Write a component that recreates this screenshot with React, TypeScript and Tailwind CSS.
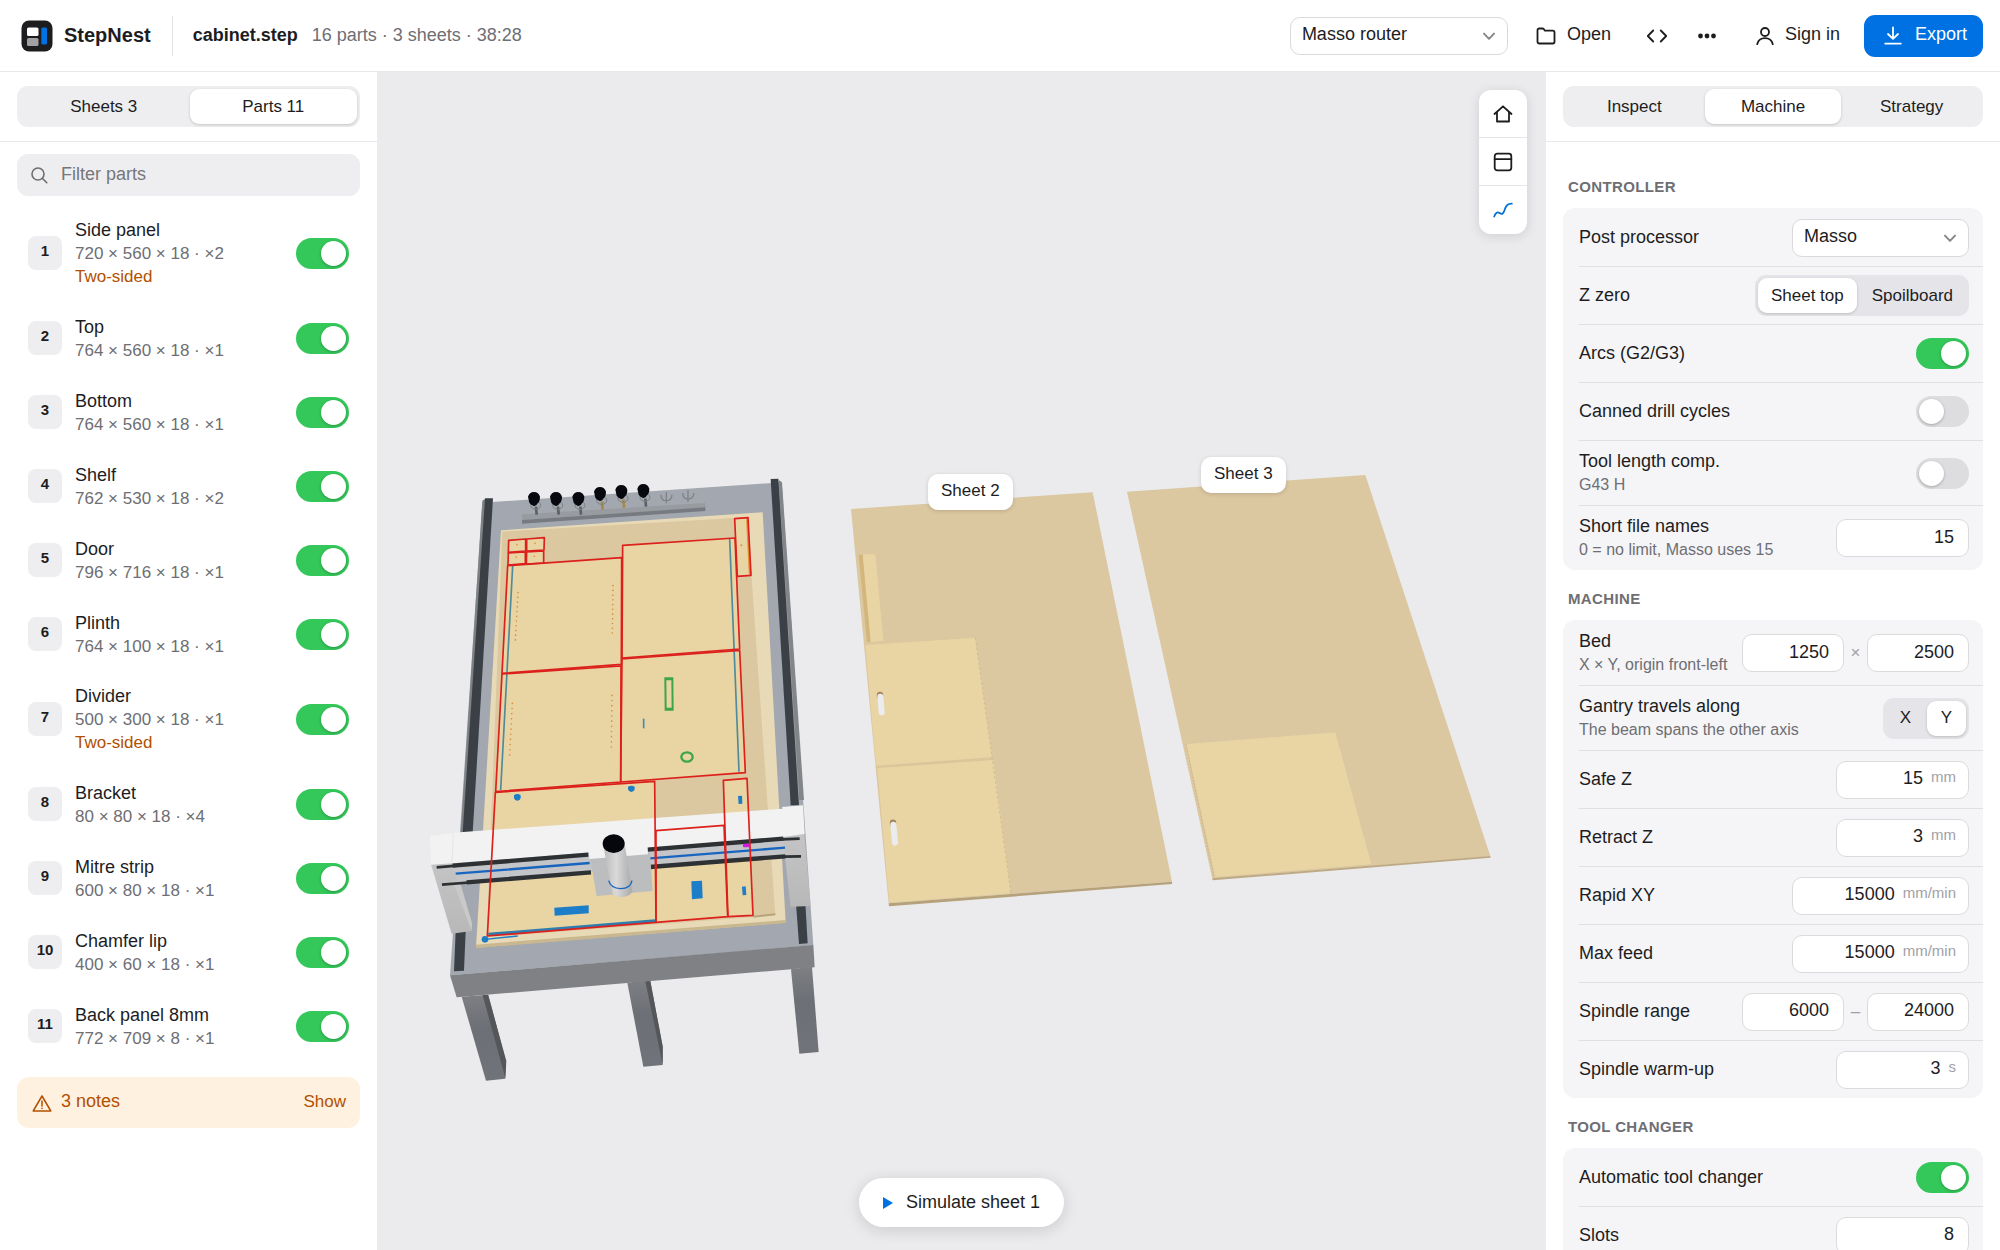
import React, { useId, useState } from "react";

type Part = { name: string; size: string; qty: number; twoSided?: boolean };

const PARTS: Part[] = [
  { name: "Side panel", size: "720 × 560 × 18", qty: 2, twoSided: true },
  { name: "Top", size: "764 × 560 × 18", qty: 1 },
  { name: "Bottom", size: "764 × 560 × 18", qty: 1 },
  { name: "Shelf", size: "762 × 530 × 18", qty: 2 },
  { name: "Door", size: "796 × 716 × 18", qty: 1 },
  { name: "Plinth", size: "764 × 100 × 18", qty: 1 },
  { name: "Divider", size: "500 × 300 × 18", qty: 1, twoSided: true },
  { name: "Bracket", size: "80 × 80 × 18", qty: 4 },
  { name: "Mitre strip", size: "600 × 80 × 18", qty: 1 },
  { name: "Chamfer lip", size: "400 × 60 × 18", qty: 1 },
  { name: "Back panel 8mm", size: "772 × 709 × 8", qty: 1 },
];

/* ---------- icons ---------- */

function Icon({ children, className = "size-5" }: { children: React.ReactNode; className?: string }) {
  return (
    <svg
      viewBox="0 0 20 20"
      className={`shrink-0 ${className}`}
      fill="none"
      stroke="currentColor"
      strokeWidth="1.8"
      strokeLinecap="round"
      strokeLinejoin="round"
      aria-hidden="true"
    >
      {children}
    </svg>
  );
}

function Logo() {
  return (
    <svg viewBox="0 0 32 32" className="size-8 shrink-0" aria-hidden="true">
      <rect x="0.5" y="0.5" width="31" height="31" rx="7.5" fill="#1d1d1f" />
      <rect x="6" y="7.5" width="11.500" height="8.500" rx="1.500" fill="#fff" />
      <rect x="6" y="18" width="11.500" height="8" rx="1.500" fill="#a1a1a3" />
      <rect x="20.300" y="7.500" width="5.700" height="17" rx="1.500" fill="#0071e3" />
    </svg>
  );
}

const Chevron = () => (
  <svg
    viewBox="0 0 12 8"
    className="pointer-events-none absolute right-[13px] top-1/2 h-2 w-3 -translate-y-1/2 text-[#86868b]"
    fill="none"
    stroke="currentColor"
    strokeWidth="1.9"
    strokeLinecap="round"
    strokeLinejoin="round"
    aria-hidden="true"
  >
    <path d="M1 1.600 6 6.800 11 1.600" />
  </svg>
);

/* ---------- controls ---------- */

function Select({ label, value, id, className }: { label?: string; value: string; id?: string; className: string }) {
  return (
    <div className={`relative ${className}`}>
      <select
        id={id}
        aria-label={label}
        defaultValue={value}
        className="h-[38px] w-full appearance-none rounded-[10px] border border-[#d9d9dc] bg-white pb-0.5 pl-[11px] pr-8 text-[18px]"
      >
        <option>{value}</option>
      </select>
      <Chevron />
    </div>
  );
}

function Toggle({ on, id, label }: { on?: boolean; id?: string; label?: string }) {
  return (
    <input
      type="checkbox"
      role="switch"
      id={id}
      aria-label={label}
      defaultChecked={on}
      className="relative h-[31px] w-[53px] shrink-0 appearance-none rounded-full bg-[#dddddf] before:absolute before:left-[3px] before:top-[3px] before:size-[25px] before:rounded-full before:bg-white before:shadow-[0_1px_3px_rgba(0,0,0,0.25)] checked:bg-[#34c759] checked:before:left-[25px]"
    />
  );
}

function Segmented({
  options,
  initial,
  label,
  fill,
  compact,
}: {
  options: string[];
  initial: string;
  label: string;
  fill?: boolean;
  compact?: boolean;
}) {
  const [active, setActive] = useState(initial);
  return (
    <div
      role="group"
      aria-label={label}
      className={`flex h-[41px] gap-0.5 rounded-[11px] p-[3px] text-[17px] ${fill ? "bg-[#eeeef0]" : "bg-[#e5e5e9]"}`}
    >
      {options.map((o) => (
        <button
          key={o}
          type="button"
          aria-pressed={o === active}
          onClick={() => setActive(o)}
          className={`rounded-[9px] ${fill ? "flex-1" : compact ? "w-[39px]" : "px-[13px]"} ${
            o === active ? "bg-white shadow-[0_1px_3px_rgba(0,0,0,0.18)]" : ""
          }`}
        >
          {o}
        </button>
      ))}
    </div>
  );
}

function NumberField({
  value,
  unit,
  id,
  label,
  className,
}: {
  value: string;
  unit?: string;
  id?: string;
  label?: string;
  className: string;
}) {
  return (
    <div className={`flex h-[38px] shrink-0 items-center rounded-[10px] border border-[#dbdbde] bg-white ${className}`}>
      <input
        id={id}
        aria-label={label}
        defaultValue={value}
        inputMode="numeric"
        className={`h-full min-w-0 flex-1 bg-transparent pb-0.5 text-right text-[18px] outline-none ${unit ? "pr-2" : "pr-3.5"}`}
      />
      {unit && <span className="pb-1.5 pr-3 text-[15px] leading-5 text-[#a1a1a6]">{unit}</span>}
    </div>
  );
}

function Row({ label, hint, htmlFor, children }: { label: string; hint?: string; htmlFor?: string; children: React.ReactNode }) {
  return (
    <div
      className={`ml-4 flex items-center justify-between border-t border-[#e0e0e3] pr-3.5 first:border-transparent ${
        hint ? "min-h-[65px]" : "min-h-[58px]"
      }`}
    >
      <div className="pb-0.5">
        <label htmlFor={htmlFor} className="block text-[18px] leading-6">
          {label}
        </label>
        {hint && <p className="text-[16px] leading-[23px] text-[#6e6e73]">{hint}</p>}
      </div>
      {children}
    </div>
  );
}

function Section({ title, children }: { title: string; children: React.ReactNode }) {
  return (
    <section>
      <h2 className="px-[5px] pb-[9px] pt-[17px] text-[15px] font-bold uppercase leading-6 tracking-wide text-[#6e6e73]">{title}</h2>
      <div className="rounded-xl bg-[#f5f5f7]">{children}</div>
    </section>
  );
}

/* ---------- header ---------- */

function Header() {
  const ghost = "flex h-10 items-center rounded-[10px]";
  return (
    <header className="flex h-[72px] shrink-0 items-center border-b border-[#e8e8ea] bg-white pl-[21px] pr-[17px] text-[18px]">
      <Logo />
      <span className="ml-[11px] pb-0.5 text-[20px] font-bold">StepNest</span>
      <span className="ml-[21px] h-10 w-px bg-[#e5e5e7]" />
      <h1 className="ml-5 text-[18px] font-bold">cabinet.step</h1>
      <p className="ml-3.5 text-[#6e6e73]">16 parts · 3 sheets · 38:28</p>
      <div className="ml-auto flex items-center">
        <Select label="Machine profile" value="Masso router" className="w-[218px]" />
        <button type="button" className={`${ghost} ml-7 gap-[11px]`}>
          <Icon>
            <path d="M1.5 4.2c0-1 .7-1.7 1.7-1.7h3.3c.5 0 .9.2 1.2.5L9 4.700h7.800c1 0 1.700.7 1.700 1.700v9.400c0 1-.7 1.700-1.700 1.700H3.200c-1 0-1.700-.7-1.700-1.700z" />
          </Icon>
          <span className="pb-0.5">Open</span>
        </button>
        <button type="button" aria-label="View code" className={`${ghost} ml-9`}>
          <Icon>
            <path d="M6.200 4.500.8 10l5.400 5.500M13.800 4.500 19.200 10l-5.400 5.500" />
          </Icon>
        </button>
        <button type="button" aria-label="More" className={`${ghost} ml-[30px]`}>
          <Icon>
            <g fill="currentColor" stroke="none">
              <circle cx="3.500" cy="10" r="2.400" />
              <circle cx="10" cy="10" r="2.400" />
              <circle cx="16.500" cy="10" r="2.400" />
            </g>
          </Icon>
        </button>
        <button type="button" className={`${ghost} ml-[38px] gap-2.5`}>
          <Icon>
            <circle cx="10" cy="6" r="4" />
            <path d="M2.200 18.200c1-4 4-6 7.800-6s6.800 2 7.800 6" />
          </Icon>
          <span className="pb-0.5">Sign in</span>
        </button>
        <button
          type="button"
          className="ml-6 flex h-[42px] items-center gap-3 rounded-[11px] bg-[#0071e3] pl-[19px] pr-4 text-white"
        >
          <Icon>
            <path d="M10 1.500v11M5 8l5 4.800L15 8M2.200 17.600h15.600" />
          </Icon>
          <span className="pb-0.5">Export</span>
        </button>
      </div>
    </header>
  );
}

/* ---------- left panel ---------- */

function PartsPanel() {
  return (
    <aside className="flex w-[377px] shrink-0 flex-col bg-white">
      <div className="border-b border-[#e8e8ea] px-[17px] py-3.5">
        <Segmented fill label="List" options={["Sheets 3", "Parts 11"]} initial="Parts 11" />
      </div>
      <div className="px-[17px] pt-3">
        <label className="flex h-[42px] items-center gap-3 rounded-[11px] bg-[#eeeef0] px-3">
          <svg
            viewBox="0 0 20 20"
            className="size-5 shrink-0 text-[#6e6e73]"
            fill="none"
            stroke="currentColor"
            strokeWidth="1.600"
            strokeLinecap="round"
            aria-hidden="true"
          >
            <circle cx="9" cy="9" r="6" />
            <path d="m13.500 13.500 4.300 4.300" />
          </svg>
          <input
            type="text"
            aria-label="Filter parts"
            placeholder="Filter parts"
            className="min-w-0 flex-1 bg-transparent pb-0.5 text-[18px] outline-none placeholder:text-[#76767b]"
          />
        </label>
      </div>
      <ul className="px-[17px] pt-[9px]">
        {PARTS.map((p, i) => (
          <li key={p.name} className="flex min-h-[74px] items-center px-[11px] py-[13px]">
            <span className="flex size-[34px] shrink-0 items-center justify-center rounded-lg bg-[#eeeef0] pb-[3px] text-[15px] font-bold">
              {i + 1}
            </span>
            <div className="ml-[13px] min-w-0 flex-1">
              <h3 className="text-[18px] leading-6">{p.name}</h3>
              <p className="text-[17px] leading-[23px] text-[#6e6e73]">
                {p.size} · ×{p.qty}
              </p>
              {p.twoSided && <p className="text-[17px] leading-[23px] text-[#b25000]">Two-sided</p>}
            </div>
            <Toggle on label={`Include ${p.name}`} />
          </li>
        ))}
      </ul>
      <div className="mx-[17px] mt-3.5 flex h-[51px] items-center rounded-xl bg-[#fff1e0] pl-[15px] pr-3.5 text-[#b25000]">
        <Icon>
          <g strokeWidth="1.500">
            <path d="M10 3 18.800 18H1.200z" />
            <path d="M10 8v5M10 15.200v.3" />
          </g>
        </Icon>
        <span className="ml-[9px] pb-0.5 text-[18px]">3 notes</span>
        <button type="button" className="ml-auto pb-0.5 text-[17px]">
          Show
        </button>
      </div>
    </aside>
  );
}

/* ---------- 3D viewport ---------- */

const CUPS = [
  [342, 116],
  [408, 116],
  [475, 116],
  [540, 101],
  [604, 95],
  [670, 92],
];

const TOOLPATH_OUTLINES = [
  "266,241 317,237 317,273 265,277",
  "320,237 373,233 372,270 320,273",
  "265,279 316,276 316,311 264,315",
  "320,276 371,273 371,309 319,312",
  "263,317 605,293 604,613 246,640",
  "246,642 603,618 602,966 227,995",
  "608,256 945,234 959,567 606,594",
  "606,597 959,571 976,938 602,966",
  "944,176 984,173 993,346 952,349",
  "226,997 704,964 708,1387 202,1428",
  "708,1112 912,1096 923,1370 708,1387",
  "910,961 981,955 999,1366 924,1370",
];

function Scene() {
  return (
    <svg
      viewBox="377 72 1169 1178"
      preserveAspectRatio="xMidYMid slice"
      className="absolute inset-0 size-full"
      role="img"
      aria-label="Router bed with three nested sheets"
    >
      <defs>
        <linearGradient id="spindle" x1="0" x2="1">
          <stop offset="0" stopColor="#b9b9ba" />
          <stop offset="0.45" stopColor="#d9d9d9" />
          <stop offset="1" stopColor="#a9a9aa" />
        </linearGradient>
        <linearGradient id="leg" x1="0" x2="0" y1="0" y2="1">
          <stop offset="0" stopColor="#7d7f83" />
          <stop offset="0.4" stopColor="#6c6f75" />
          <stop offset="1" stopColor="#70747a" />
        </linearGradient>
        <linearGradient id="gantryLeg" x1="0" x2="0" y1="0" y2="1">
          <stop offset="0" stopColor="#c4c4c5" />
          <stop offset="1" stopColor="#b8b8b8" />
        </linearGradient>
      </defs>

      {/* sheet 2 */}
      <g transform="translate(830 440) scale(0.33333)">
        <polygon points="63,207 788,157 1026,1325 176,1390" fill="#dbc7a0" />
        <polygon points="176,1390 1026,1325 1026,1332 177,1399" fill="#b5a17a" />
        <polygon points="86,345 99,343 123,605 111,606" fill="#d3b67c" />
        <polygon points="98,343 136,343 160,602 122,606" fill="#e9d4a3" />
        <polygon points="106,615 436,593 487,952 138,977" fill="#e9d4a3" />
        <polygon points="142,984 490,960 543,1360 178,1388" fill="#e9d4a3" />
        <path d="M142 981 488 956" stroke="#dcc596" strokeWidth="5" />
        <path d="M436 593 543 1360" stroke="#c9b183" strokeWidth="2" strokeDasharray="8 7" />
        <g strokeLinecap="round" fill="none">
          <path d="M150 765v4M189 1148v4" stroke="#a5835a" strokeWidth="19" />
          <g strokeWidth="18" stroke="#ececee">
            <path d="m151 770 4 47M190 1154l5 54" />
          </g>
        </g>
      </g>

      {/* sheet 3 */}
      <g transform="translate(1110 440) scale(0.33333)">
        <polygon points="51,155 766,105 1141,1249 307,1316" fill="#dbc7a0" />
        <polygon points="307,1315 1141,1248 1142,1253 308,1321" fill="#bda983" />
        <polygon points="228,912 676,877 784,1273 316,1311" fill="#e9d4a3" />
        <path d="m228 912 84 400" stroke="#cdb68a" strokeWidth="3" strokeDasharray="6 4" />
      </g>

      {/* router and sheet 1 */}
      <g transform="translate(420 460) scale(0.33333)">
        <g fill="url(#leg)">
          <polygon points="125,1610 205,1604 258,1805 256,1856 198,1862" />
          <polygon points="622,1568 690,1560 728,1760 728,1815 670,1820" />
          <polygon points="1113,1528 1176,1520 1196,1776 1138,1781" />
        </g>
        <g fill="#54565a">
          <polygon points="188,1606 204,1604 259,1803 256,1854" />
          <polygon points="676,1564 691,1562 728,1759 728,1813" />
        </g>

        <polygon points="187,128 1085,67 1148,1000 1180,1456 90,1546 128,1000" fill="#a3a7af" />
        <polygon points="90,1546 1180,1455 1184,1522 110,1612" fill="#7f8185" />
        <polygon points="1076,60 1086,67 1152,1020 1138,1020" fill="#82858a" />
        <polygon points="187,122 196,116 140,1118 122,1118" fill="#7d8085" />
        <g fill="#3b4046">
          <polygon points="195,115 219,115 158,1118 128,1118" />
          <polygon points="1052,57 1075,56 1137,1036 1112,1036" />
          <polygon points="107,1413 137,1413 132,1532 102,1534" />
          <polygon points="1128,1331 1156,1330 1163,1450 1137,1452" />
        </g>

        <polygon points="306,163 856,129 856,142 306,180" fill="#989ba0" />
        <polygon points="306,180 856,142 856,153 306,191" fill="#777b81" />
        {CUPS.map(([x, y]) => (
          <g key={x}>
            <path d={`M${x + 6} ${y + 24} l2 24`} stroke={x > 500 && x < 640 ? "#a58a45" : "#5c6066"} strokeWidth="8" />
            <ellipse cx={x + 5} cy={y + 20} rx="15" ry="12" fill="none" stroke="#7b7f85" strokeWidth="3" />
            <path
              d={`M${x - 18} ${y - 6} q4 -14 18 -14 q14 0 18 14 q0 14 -7 20 q-5 10 -12 8 q-10 -4 -13 -10 z`}
              fill="#07090e"
            />
          </g>
        ))}
        <g fill="none" stroke="#808389" strokeWidth="4">
          <path d="M723 104q0 18 16 18t17-18M739 96v34M788 99q0 18 16 18t18-18M804 90v36" />
        </g>

        <polygon points="243,211 1028,157 1097,1388 168,1463" fill="#e8dab6" />
        <polygon points="168,1454 1097,1380 1097,1389 168,1464" fill="#c8b78f" />
        <polygon points="247,215 982,172 1066,1366 200,1431" fill="#dbc7a0" />
        <polygon points="1000,1367 1066,1360 1066,1366 1000,1373" fill="#b7a47c" />

        <g fill="#e9d4a3">
          {TOOLPATH_OUTLINES.map((p) => (
            <polygon key={p} points={p} />
          ))}
        </g>

        <g stroke="#4f8b9d" strokeWidth="5">
          <path d="M278 318 242 990M929 236 957 935" />
        </g>
        <g stroke="#d98f3d" strokeWidth="5" strokeLinecap="round" strokeDasharray="0 14.200">
          <path d="m294 398-8 143M579 377l-2 143" />
        </g>
        <g stroke="#d98f3d" strokeWidth="5" strokeLinecap="round" strokeDasharray="0 15.500">
          <path d="m277 730-8 157M576 706l-2 158" />
        </g>
        <g fill="#e0902f">
          <circle cx="291" cy="254" r="2.500" />
          <circle cx="345" cy="250" r="2.500" />
          <circle cx="289" cy="291" r="2.500" />
          <circle cx="343" cy="289" r="2.500" />
          <circle cx="964" cy="256" r="3" />
        </g>
        <path d="M981 178 989 344" stroke="#e0902f" strokeWidth="5" />
        <g fill="none" stroke="#3da647" strokeWidth="6">
          <path d="M736 655h21l1 94h-21z" />
          <path d="M735 658h23M736 746h22" />
          <ellipse cx="801" cy="891" rx="17" ry="14" strokeWidth="7" />
        </g>
        <path d="M671 776v29" stroke="#3f8fb8" strokeWidth="5" />
        <g fill="#1c7dc8">
          <path d="M282 1006q10-8 20 0v8q-2 8-10 8t-10-8zM624 980q10-6 20 0v8q-2 8-10 8t-10-8z" />
          <polygon points="403,1343 506,1336 506,1360 404,1367" />
          <polygon points="814,1264 846,1262 848,1315 816,1318" />
          <polygon points="954,1008 966,1007 967,1031 956,1032" />
          <polygon points="966,1280 977,1279 979,1305 968,1306" />
          <circle cx="195" cy="1438" r="10" />
        </g>
        <path d="m205 1423 501-41" stroke="#2f7dae" strokeWidth="9" />
        <path d="m195 1438 98-10" stroke="#1c7dc8" strokeWidth="4" />

        {/* gantry */}
        <polygon points="33,1213 98,1208 155,1413 95,1421" fill="url(#gantryLeg)" />
        <polygon points="98,1262 120,1266 156,1390 155,1413" fill="#c9c9ca" />
        <polygon points="1088,1130 1153,1122 1172,1338 1112,1340" fill="url(#gantryLeg)" />
        <polygon points="98,1208 1090,1130 1096,1188 112,1268" fill="#c3c5c9" />
        <polygon points="30,1128 100,1118 1088,1046 1086,1041 1149,1036 1154,1122 1090,1131 96,1210 33,1214" fill="#f2f2f3" />
        <path d="m100 1118-4 90" stroke="#dedee0" strokeWidth="2" />
        <g stroke="#2e3134" fill="none">
          <path d="m98 1217 407-33M140 1267l373-30M683 1169l407-33M690 1221l406-32" strokeWidth="13" />
          <path d="m50 1222 60-5M66 1274l100-8M1085 1138l54-2M1090 1190l53-1" strokeWidth="8" />
        </g>
        <path d="m107 1241 402-32M690 1195l405-32" stroke="#1765bf" strokeWidth="7" />
        <polygon points="510,1192 690,1178 698,1293 530,1308" fill="#bcbdbe" />
        <polygon points="505,1150 680,1140 684,1183 508,1197" fill="#f2f2f3" />
        <path d="M549 1152 613 1145 637 1294q-8 18-33 17-22-1-27-12z" fill="url(#spindle)" />
        <ellipse cx="581" cy="1151" rx="33" ry="28" fill="#05070c" />
        <path d="M566 1262q6 23 36 24 30 0 34-24" fill="none" stroke="#1765bf" strokeWidth="4" />

        <g fill="none" stroke="#dc201b" strokeWidth="5" strokeLinejoin="round">
          {TOOLPATH_OUTLINES.map((p) => (
            <polygon key={p} points={p} />
          ))}
        </g>
        <rect x="969" y="1151" width="19" height="11" rx="3" fill="#d31be0" />
      </g>
    </svg>
  );
}

function Viewport() {
  const pin =
    "absolute flex h-9 items-center rounded-[10px] bg-white px-[13px] pb-0.5 text-[17px] shadow-[0_1px_4px_rgba(0,0,0,0.15)]";
  const tool = "flex h-12 w-12 items-center justify-center";
  return (
    <main className="relative min-w-0 flex-1 overflow-hidden bg-[#ebebed]">
      <Scene />
      <span className={`${pin} left-[551px] top-[402px]`}>Sheet 2</span>
      <span className={`${pin} left-[824px] top-[385px]`}>Sheet 3</span>
      <div className="absolute right-[19px] top-[18px] divide-y divide-[#e5e5e7] rounded-xl bg-white shadow-[0_2px_12px_rgba(0,0,0,0.12)]">
        <button type="button" aria-label="Home view" className={tool}>
          <Icon>
            <path d="M1.500 10 10 2.300 18.500 10M4 8v9.500h12V8" />
          </Icon>
        </button>
        <button type="button" aria-label="Top view" className={tool}>
          <Icon>
            <rect x="1.700" y="1.700" width="16.600" height="16.600" rx="2.500" />
            <path d="M1.700 7.200h16.600" />
          </Icon>
        </button>
        <button type="button" aria-label="Toolpaths" aria-pressed="true" className={`${tool} text-[#0071d8]`}>
          <Icon>
            <path d="M1.200 16.500c1.500-4 3.300-5 5.500-3.400 2.300 1.600 3.600.6 4.600-2.400 1.500-5 3-7 7.500-7" />
          </Icon>
        </button>
      </div>
      <div className="absolute inset-x-0 bottom-[23px] flex justify-center">
        <button
          type="button"
          className="flex h-[49px] items-center gap-[13px] rounded-full bg-white px-6 text-[18px] shadow-[0_3px_16px_rgba(0,0,0,0.14)]"
        >
          <svg viewBox="0 0 10 12" className="h-3 w-2.5" fill="#0071e3" aria-hidden="true">
            <path d="M0 0v12l10-6z" />
          </svg>
          <span>Simulate sheet 1</span>
        </button>
      </div>
    </main>
  );
}

/* ---------- right panel ---------- */

function FieldRow({ label, hint, value, unit, wide }: { label: string; hint?: string; value: string; unit?: string; wide?: boolean }) {
  const id = useId();
  return (
    <Row label={label} hint={hint} htmlFor={id}>
      <NumberField id={id} value={value} unit={unit} className={wide ? "w-[177px]" : "w-[133px]"} />
    </Row>
  );
}

function ToggleRow({ label, hint, on }: { label: string; hint?: string; on?: boolean }) {
  const id = useId();
  return (
    <Row label={label} hint={hint} htmlFor={id}>
      <Toggle id={id} on={on} />
    </Row>
  );
}

function PairRow({ label, hint, values, sep, names }: { label: string; hint?: string; values: string[]; sep: string; names: string[] }) {
  const id = useId();
  return (
    <Row label={label} hint={hint} htmlFor={id}>
      <div className="flex items-center text-[#a1a1a6]">
        <NumberField id={id} value={values[0]} className="w-[102px] text-[#1d1d1f]" />
        <span className="w-[23px] text-center text-[17px]">{sep}</span>
        <NumberField label={names[1]} value={values[1]} className="w-[102px] text-[#1d1d1f]" />
      </div>
    </Row>
  );
}

function MachinePanel() {
  return (
    <aside className="flex w-[454px] shrink-0 flex-col bg-white">
      <div className="shrink-0 border-b border-[#e8e8ea] px-[17px] py-3.5">
        <Segmented fill label="Panel" options={["Inspect", "Machine", "Strategy"]} initial="Machine" />
      </div>
      <div className="min-h-0 flex-1 overflow-y-auto px-[17px] pt-4 [scrollbar-width:none]">
        <Section title="Controller">
          <Row label="Post processor" htmlFor="post">
            <Select id="post" value="Masso" className="w-[177px]" />
          </Row>
          <Row label="Z zero">
            <Segmented label="Z zero" options={["Sheet top", "Spoilboard"]} initial="Sheet top" />
          </Row>
          <ToggleRow label="Arcs (G2/G3)" on />
          <ToggleRow label="Canned drill cycles" />
          <ToggleRow label="Tool length comp." hint="G43 H" />
          <FieldRow label="Short file names" hint="0 = no limit, Masso uses 15" value="15" />
        </Section>
        <Section title="Machine">
          <PairRow label="Bed" hint="X × Y, origin front-left" values={["1250", "2500"]} sep="×" names={["Bed X", "Bed Y"]} />
          <Row label="Gantry travels along" hint="The beam spans the other axis">
            <Segmented compact label="Gantry travels along" options={["X", "Y"]} initial="Y" />
          </Row>
          <FieldRow label="Safe Z" value="15" unit="mm" />
          <FieldRow label="Retract Z" value="3" unit="mm" />
          <FieldRow wide label="Rapid XY" value="15000" unit="mm/min" />
          <FieldRow wide label="Max feed" value="15000" unit="mm/min" />
          <PairRow label="Spindle range" values={["6000", "24000"]} sep="–" names={["Minimum speed", "Maximum speed"]} />
          <FieldRow label="Spindle warm-up" value="3" unit="s" />
        </Section>
        <Section title="Tool changer">
          <ToggleRow label="Automatic tool changer" on />
          <FieldRow label="Slots" value="8" />
        </Section>
      </div>
    </aside>
  );
}

export default function App() {
  return (
    <div className="flex h-screen flex-col overflow-hidden bg-white font-['Liberation_Sans',Arial,sans-serif] text-[#1d1d1f]">
      <Header />
      <div className="flex min-h-0 flex-1">
        <PartsPanel />
        <Viewport />
        <MachinePanel />
      </div>
    </div>
  );
}
